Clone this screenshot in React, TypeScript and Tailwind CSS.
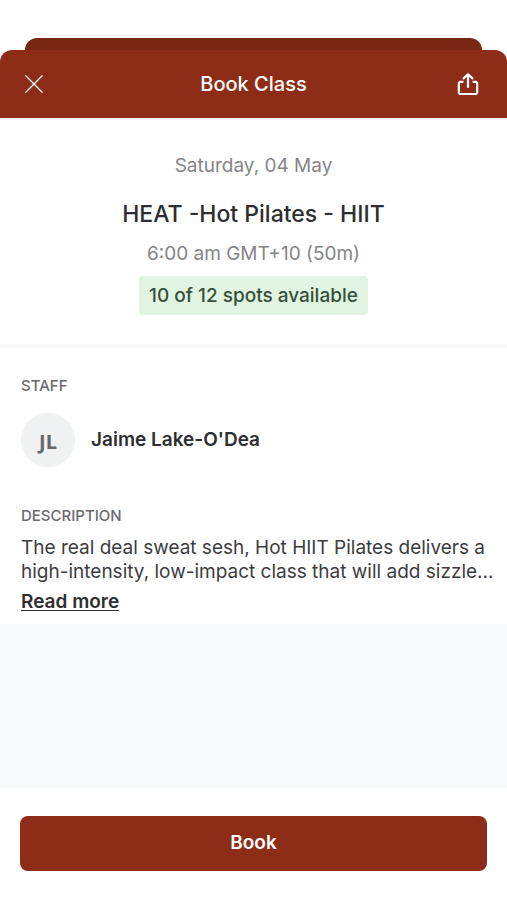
import { useState } from "react";

const summary = "The real deal sweat sesh, Hot HIIT Pilates delivers a high-intensity, low-impact class that will add sizzle";

function SheetHeader() {
  return (
    <div className="pt-[38px]">
      <div className="mx-[25px] h-3 rounded-t-xl bg-[#782712]" />
      <header className="flex h-[68px] items-center justify-between rounded-t-xl bg-[#8e2d17] px-5 text-white">
        <button aria-label="Close" className="flex size-10 items-center pl-1">
          <svg className="size-5" viewBox="0 0 20 20" fill="none" stroke="currentColor" strokeWidth="1.3" strokeLinecap="round">
            <path d="M1.8 1.8 18.2 18.2M18.2 1.8 1.8 18.2" />
          </svg>
        </button>
        <h1 className="text-xl font-medium">Book Class</h1>
        <button aria-label="Share" className="flex size-10 items-center justify-center">
          <svg className="size-6" viewBox="0 0 24 24" fill="none" stroke="currentColor" strokeWidth="2.2" strokeLinecap="round" strokeLinejoin="round">
            <path d="M7.6 9.8H5.6A1.8 1.8 0 0 0 3.8 11.6v8.6A1.8 1.8 0 0 0 5.6 22h14.8a1.8 1.8 0 0 0 1.8-1.8v-8.6a1.8 1.8 0 0 0-1.8-1.8h-2" />
            <path d="M13 15V2.4M8.6 6.4 13 2.2l4.4 4.2" />
          </svg>
        </button>
      </header>
    </div>
  );
}

function App() {
  const [expanded, setExpanded] = useState(false);

  return (
    <div className="flex min-h-screen flex-col bg-white font-[Inter,sans-serif] text-[#2e2e30]">
      <SheetHeader />
      <section className="flex flex-col items-center border-b-4 border-[#f9f9f9] pt-[34px] pb-[29px] text-center">
        <p className="text-[19px] leading-7 text-[#858587]">Saturday, 04 May</p>
        <h2 className="mt-5 text-[23px] leading-7 font-medium">HEAT -Hot Pilates - HIIT</h2>
        <p className="mt-3 text-[19px] leading-7 text-[#858587]">6:00 am GMT+10 (50m)</p>
        <p className="mt-2 rounded bg-[#e1f3e1] px-2.5 py-1 text-[19px] leading-[31px] font-medium text-[#35503c]">
          10 of 12 spots available
        </p>
      </section>
      <section className="px-[21px] pt-7">
        <h3 className="text-[15px] leading-5 font-medium text-[#6a6a6e]">STAFF</h3>
        <div className="mt-[17px] flex items-center gap-4">
          <div className="flex size-[54px] items-center justify-center rounded-full bg-[#f0f1f3] pt-1 font-['Open_Sans',sans-serif] text-xl font-bold text-[#66676b]">
            JL
          </div>
          <p className="text-[19px] font-semibold">Jaime Lake-O'Dea</p>
        </div>
      </section>
      <section className="pt-[39px] pr-3 pb-2 pl-[21px]">
        <h3 className="text-[15px] leading-5 font-medium text-[#6a6a6e]">DESCRIPTION</h3>
        <p className="mt-[10px] text-[19px] leading-6 text-[#3c3c3e]">
          {expanded ? `${summary} to your day.` : `${summary}...`}
        </p>
        <button className="mt-1 block text-[19px] leading-7 font-semibold underline underline-offset-2" onClick={() => setExpanded(!expanded)}>
          {expanded ? "Read less" : "Read more"}
        </button>
      </section>
      <div className="flex-1 bg-[#f8f9fb]" />
      <footer className="px-5 pt-7 pb-[29px]">
        <button className="h-[55px] w-full rounded-lg bg-[#8e2d17] text-[19px] font-semibold text-white">Book</button>
      </footer>
    </div>
  );
}

export default App;
